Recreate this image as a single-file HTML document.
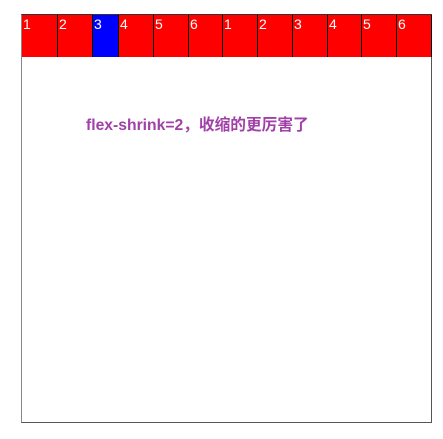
<!DOCTYPE html>
<html><head><meta charset="utf-8"><style>
body{margin:0;width:443px;height:439px;background:#fff;position:relative;overflow:hidden;font-family:"Liberation Sans","Noto Sans CJK SC",sans-serif}
.box{position:absolute;left:21px;top:14px;width:409px;height:407px;border:1px solid #555;border-left-color:#888;border-top-color:#333}
.it{position:absolute;top:15px;height:42px;background:#f00;color:#fff;font-size:14px;line-height:18px;box-sizing:border-box;border-right:1px solid #000;padding-left:1px}
h{position:absolute;left:86px;top:112px;font-size:15.7px;font-weight:bold;color:#a040a8;white-space:nowrap}
</style></head><body>
<div class="box"></div>
<div class="it" style="left:22px;width:36px">1</div>
<div class="it" style="left:58px;width:35px">2</div>
<div class="it" style="left:93px;width:26px;background:#00f">3</div>
<div class="it" style="left:119px;width:35px">4</div>
<div class="it" style="left:154px;width:35px">5</div>
<div class="it" style="left:189px;width:34px">6</div>
<div class="it" style="left:223px;width:35px">1</div>
<div class="it" style="left:258px;width:35px">2</div>
<div class="it" style="left:293px;width:35px">3</div>
<div class="it" style="left:328px;width:34px">4</div>
<div class="it" style="left:362px;width:35px">5</div>
<div class="it" style="left:397px;width:35px">6</div>
<h>flex-shrink=2，收缩的更厉害了</h>
</body></html>
